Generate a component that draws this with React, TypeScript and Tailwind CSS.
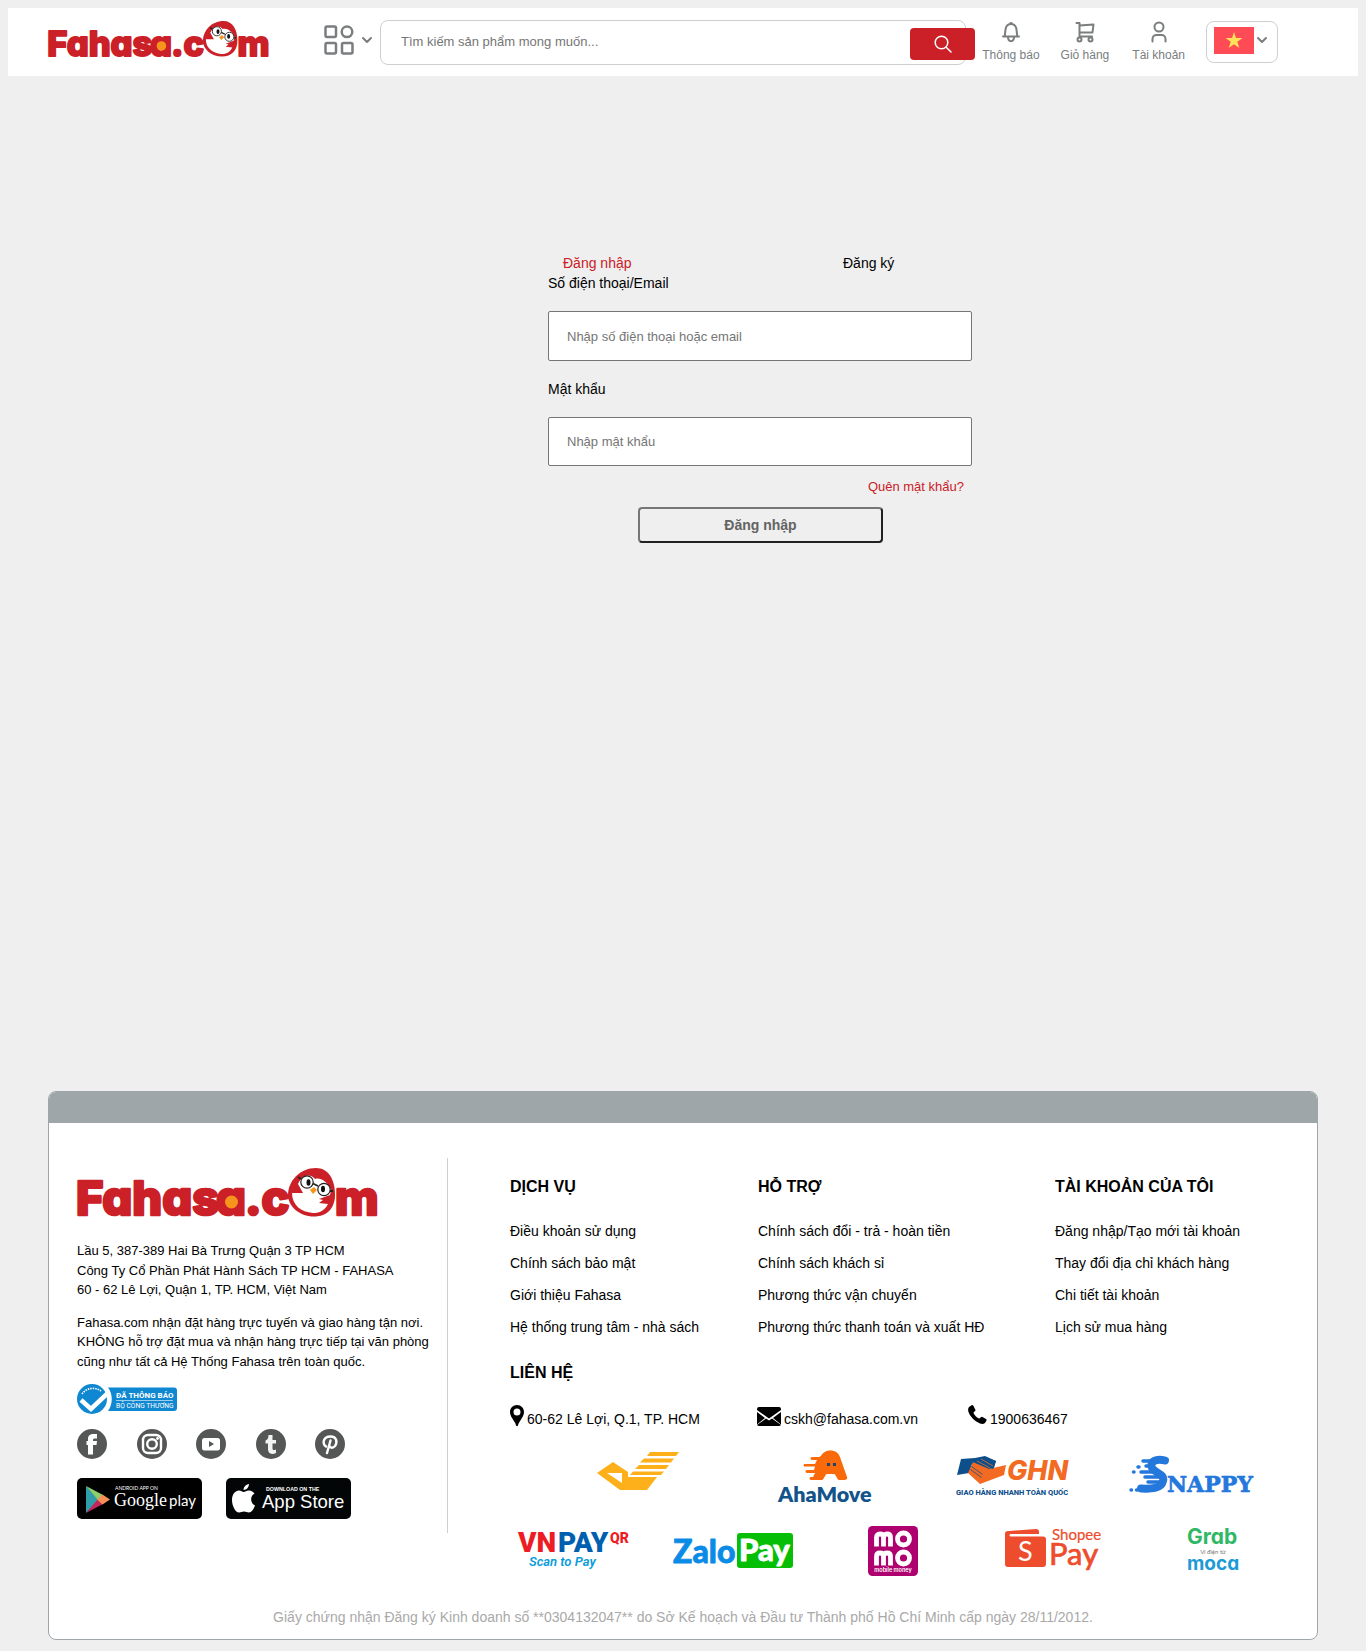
import React from "react";

function FahasaLogo({ className }: { className: string }) {
  return (
    <svg viewBox="0 0 301 49" className={`overflow-visible ${className}`} role="img" aria-label="Fahasa.com">
      <g
        className="[font-feature-settings:'cv11']"
        fill="#cb2027"
        stroke="#cb2027"
        strokeWidth="2.6"
        strokeLinejoin="round"
        fontFamily="Inter, sans-serif"
        fontWeight="800"
        fontSize="47"
      >
        <text x="-1" y="47">Fahas</text>
        <text x="139" y="47">a</text>
        <text x="168" y="47">.c</text>
        <text x="258" y="47">m</text>
      </g>
      <circle cx="154.500" cy="34" r="6.500" fill="#f7941d" />
      <path d="M239 0C251 0 258 11 258 27C258 40 250 48.500 237 48.500C222 48.500 211 38 211 27C211 13 223 0 239 0Z" fill="#cb2027" />
      <path d="M215 25L226 25L221 16C225 7 233 5 238 11C243 9 251 14 254 22L253 27L242 31L246 32L242 35L251 36C247 44 241 45 236 45C224 44 215 37 215 25Z" fill="#fff" />
      <g fill="#fff" stroke="#222" strokeWidth="1.200">
        <circle cx="230" cy="14" r="6.200" />
        <circle cx="247" cy="21.500" r="6.200" />
        <path d="M236 15.500L241 18M224 11L221 9M253 23L256 23" fill="none" strokeWidth="1.800" />
      </g>
      <ellipse cx="231.500" cy="14.500" rx="2" ry="3.200" fill="#111" />
      <ellipse cx="246" cy="21" rx="2" ry="3.200" fill="#111" />
      <path d="M237 19L240 22L236 26L233 22Z" fill="#f7941d" />
    </svg>
  );
}

function Chevron() {
  return (
    <svg viewBox="0 0 12 8" className="h-2 w-3" fill="none" stroke="#7a7e7f" strokeWidth="2" strokeLinecap="round" strokeLinejoin="round">
      <path d="M2 2L6 6L10 2" />
    </svg>
  );
}

function Action({ label, className, children }: { label: string; className: string; children: React.ReactNode }) {
  return (
    <a href="#" className={`flex flex-col items-center text-xs leading-4 whitespace-nowrap text-[#7a7e7f] ${className}`}>
      <svg viewBox="0 0 20 22" className="mb-1 h-[22px] w-5" fill="none" stroke="#7a7e7f" strokeWidth="2" strokeLinecap="round" strokeLinejoin="round">
        {children}
      </svg>
      {label}
    </a>
  );
}

function Header() {
  return (
    <header className="flex h-17 items-start bg-white pr-20 pl-10">
      <a href="#" className="mt-[13px] shrink-0">
        <FahasaLogo className="h-9 w-[221px]" />
      </a>
      <button type="button" aria-label="Danh mục" className="mt-[17px] ml-[55px] flex shrink-0 items-center gap-[7px]">
        <svg viewBox="0 0 30 30" className="h-[30px] w-[30px]" fill="none" stroke="#7a7e7f" strokeWidth="2.500">
          <rect x="1.500" y="1.500" width="10.500" height="10.500" rx="1.500" />
          <circle cx="23" cy="6.800" r="5.300" />
          <rect x="1.500" y="18" width="10.500" height="10.500" rx="1.500" />
          <rect x="18" y="18" width="10.500" height="10.500" rx="1.500" />
        </svg>
        <Chevron />
      </button>
      <form className="relative mt-3 ml-[7px] h-[45px] min-w-0 flex-1 rounded-lg border border-[#cdcfd0]">
        <input
          type="text"
          aria-label="Tìm kiếm"
          placeholder="Tìm kiếm sản phẩm mong muốn..."
          className="h-[41px] w-full bg-transparent pr-16 pl-5 text-[13px] outline-none placeholder:text-[#757575]"
        />
        <button type="button" aria-label="Tìm" className="absolute top-[7px] -right-2.5 flex h-8 w-[65px] items-center justify-center rounded bg-[#cb2027]">
          <svg viewBox="0 0 18 18" className="h-[18px] w-[18px]" fill="none" stroke="#fff" strokeWidth="1.500" strokeLinecap="round">
            <circle cx="7.500" cy="7.500" r="6.300" />
            <path d="M12.200 12.200L17 17" />
          </svg>
        </button>
      </form>
      <nav className="mt-[13px] ml-4 flex shrink-0 items-start">
        <Action label="Thông báo" className="mr-[21px]">
          <path d="M2 15.500H18M3.500 15.500C4.500 13 4 8.500 5 6.500C6 4 8 3 10 3C12 3 14 4 15 6.500C16 8.500 15.500 13 16.500 15.500M9 3C9 1.500 11 1.500 11 3M7 16C7 21.500 13 21.500 13 16" />
        </Action>
        <Action label="Giỏ hàng" className="mr-[23px]">
          <path d="M1.500 2H4.500V15.500M4.500 4.500L18.500 3.500L17.500 11.500H4.500M4.500 15.500H17" />
          <circle cx="4.500" cy="18.500" r="2" />
          <circle cx="15.500" cy="18.500" r="2" />
        </Action>
        <Action label="Tài khoản" className="mr-[21px]">
          <circle cx="10" cy="6" r="4.500" />
          <path d="M3.500 20.500V18C3.500 15.500 5.500 14 7.500 14H12.500C14.500 14 16.500 15.500 16.500 18V20.500" />
        </Action>
        <button type="button" aria-label="Tiếng Việt" className="flex h-[42px] w-[72px] items-center gap-0.5 rounded-lg border border-[#cdcfd0] pb-1 pl-[7px]">
          <svg viewBox="0 0 40 27" className="h-[27px] w-10">
            <rect width="40" height="27" fill="#ff4b55" />
            <path d="M20 5L22 11H28.500L23.300 14.800L25.300 21L20 17.200L14.700 21L16.700 14.800L11.500 11H18Z" fill="#ffe15a" />
          </svg>
          <Chevron />
        </button>
      </nav>
    </header>
  );
}

function LoginForm() {
  return (
    <main className="mt-[177px] ml-[40%] w-[424px] text-sm leading-5">
      <div className="flex">
        <a href="#" className="w-[295px] pl-[15px] text-[#cb2027]">Đăng nhập</a>
        <a href="#">Đăng ký</a>
      </div>
      <form className="flex flex-col">
        <label htmlFor="account">Số điện thoại/Email</label>
        <input
          id="account"
          type="text"
          placeholder="Nhập số điện thoại hoặc email"
          className="mt-[18px] h-[50px] rounded-xs border border-[#767676] bg-white px-[18px] text-[13px] placeholder:text-[#757575]"
        />
        <label htmlFor="password" className="mt-[18px]">Mật khẩu</label>
        <input
          id="password"
          type="password"
          placeholder="Nhập mật khẩu"
          className="mt-[18px] h-[49px] rounded-xs border border-[#767676] bg-white px-[18px] text-[13px] placeholder:text-[#757575]"
        />
        <a href="#" className="mt-[11px] mr-2 self-end text-[13px] text-[#cb2027]">Quên mật khẩu?</a>
        <button
          type="button"
          className="mt-2.5 ml-[90px] h-9 w-[245px] rounded border-2 border-t-[#767676] border-r-[#212121] border-b-[#212121] border-l-[#767676] font-bold text-[#636363]"
        >
          Đăng nhập
        </button>
      </form>
    </main>
  );
}

function TradeBadge() {
  return (
    <svg viewBox="0 0 100 30" className="mt-[13px] h-[30px] w-[100px] overflow-visible" role="img" aria-label="Đã thông báo Bộ Công Thương">
      <path d="M31 3.500H97A3 3 0 0 1 100 6.500V24A3 3 0 0 1 97 27H31C36 20 36 10 31 3.500Z" fill="#0f87d1" />
      <circle cx="15" cy="15" r="15" fill="#0f87d1" />
      <path d="M4 16L14 25L32 8" fill="none" stroke="#fff" strokeWidth="4.500" />
      <path d="M5 10C9 4 18 2.500 24 7" fill="none" stroke="#fff" strokeWidth="1.600" strokeDasharray="1.500 1" />
      <g fill="#fff" fontFamily="Roboto, sans-serif">
        <text x="39" y="14" fontSize="8" fontWeight="700">ĐÃ THÔNG BÁO</text>
        <text x="39" y="24" fontSize="6.700">BỘ CÔNG THƯƠNG</text>
      </g>
      <path d="M39 16.500H96" stroke="#fff" strokeWidth=".6" />
    </svg>
  );
}

function SocialIcon({ label, children }: { label: string; children: React.ReactNode }) {
  return (
    <a href="#" aria-label={label}>
      <svg viewBox="0 0 30 30" className="h-[30px] w-[30px]">
        <circle cx="15" cy="15" r="15" fill="#555756" />
        {children}
      </svg>
    </a>
  );
}

function GooglePlay() {
  return (
    <svg viewBox="0 0 125 41" className="h-[41px] w-[125px]" role="img" aria-label="Google play">
      <rect width="125" height="41" rx="5" fill="#000" />
      <path d="M9 8L22 22L9 35Z" fill="#2f9eaa" />
      <path d="M9 8L26 17L21 22Z" fill="#8fce6a" />
      <path d="M9 35L26 26L21 21Z" fill="#c2265b" />
      <path d="M25.500 16.500L33 21.500L25.500 26.500L20 21.500Z" fill="#f69054" />
      <g fill="#fff">
        <text x="38" y="12" fontFamily="Lato, sans-serif" fontSize="5">ANDROID APP ON</text>
        <text x="37" y="28" fontFamily="Liberation Serif, serif" fontSize="18">Google</text>
        <text x="92" y="28" fontFamily="Lato, sans-serif" fontSize="15">play</text>
      </g>
    </svg>
  );
}

function AppStore() {
  return (
    <svg viewBox="0 0 125 41" className="h-[41px] w-[125px]" role="img" aria-label="App Store">
      <rect width="125" height="41" rx="5" fill="#020607" />
      <path d="M23 6C23 9 20.500 12 17.500 12C17.500 9 20 6.500 23 6ZM17.500 14C19 14 20.500 12.500 23 12.500C25.500 12.500 27.500 14 28.500 15.500C23.500 18.500 24.500 25.500 29 27.500C27.500 31.500 25.500 34.500 23 34.500C21 34.500 20 33.500 18 33.500C16 33.500 15 34.500 13 34.500C9.500 34.500 6 28 6 22C6 16 9.500 12.500 13 12.500C15 12.500 16.500 14 17.500 14Z" fill="#fff" />
      <g fill="#fff" fontFamily="Liberation Sans, sans-serif">
        <text x="40" y="13" fontSize="5.300" fontWeight="700">DOWNLOAD ON THE</text>
        <text x="36" y="30" fontSize="18.500">App Store</text>
      </g>
    </svg>
  );
}

function CompanyInfo() {
  return (
    <section className="w-[399px] shrink-0 border-r border-[#cdcfd0] pt-2.5 pb-3.5 pl-7 text-[13px] leading-normal whitespace-nowrap">
      <FahasaLogo className="h-[49px] w-[301px]" />
      <p className="mt-6">
        Lầu 5, 387-389 Hai Bà Trưng Quận 3 TP HCM<br />
        Công Ty Cổ Phần Phát Hành Sách TP HCM - FAHASA<br />
        60 - 62 Lê Lợi, Quận 1, TP. HCM, Việt Nam
      </p>
      <p className="mt-[13px]">
        Fahasa.com nhận đặt hàng trực tuyến và giao hàng tận nơi.<br />
        KHÔNG hỗ trợ đặt mua và nhận hàng trực tiếp tại văn phòng<br />
        cũng như tất cả Hệ Thống Fahasa trên toàn quốc.
      </p>
      <TradeBadge />
      <div className="mt-[15px] flex w-[268px] justify-between">
        <SocialIcon label="Facebook">
          <path d="M11 25.500V16H9.500V12H11V10C11 6.500 13 5 16.500 5H20V9.500H18C16.500 9.500 16 10 16 11V12H20L19.500 16H16V25.500Z" fill="#fff" />
        </SocialIcon>
        <SocialIcon label="Instagram">
          <rect x="6" y="6" width="18" height="18" rx="5" fill="none" stroke="#fff" strokeWidth="2.400" />
          <circle cx="15" cy="15" r="4.800" fill="none" stroke="#fff" strokeWidth="2.400" />
          <circle cx="20.500" cy="9.500" r="1.400" fill="#fff" />
        </SocialIcon>
        <SocialIcon label="YouTube">
          <rect x="6" y="9" width="18" height="12.500" rx="2.500" fill="#fff" />
          <path d="M13 12L18 15L13 18Z" fill="#555756" />
        </SocialIcon>
        <SocialIcon label="Tumblr">
          <path d="M12.500 6H16.500V11H20V14.500H16.500V19C16.500 21.500 18 21.500 20 20.500V24C15.500 26 12 24.500 12 20.500V14.500H9.500V11.500C11.500 11 12.500 9 12.500 6Z" fill="#f2f2f2" />
        </SocialIcon>
        <SocialIcon label="Pinterest">
          <path d="M11 17.500C7 14.500 8 7.500 15.500 7.500C22 7.500 22.500 13.500 20 17C18 19.500 15 19 14.500 17M15.500 11.500L12 24" fill="none" stroke="#fff" strokeWidth="2.400" strokeLinecap="round" />
        </SocialIcon>
      </div>
      <div className="mt-[19px] flex gap-6">
        <a href="#"><GooglePlay /></a>
        <a href="#"><AppStore /></a>
      </div>
    </section>
  );
}

function LinkColumn({ title, links }: { title: string; links: string[] }) {
  return (
    <div>
      <h2 className="text-base leading-6 font-bold">{title}</h2>
      <ul className="mt-4 leading-8">
        {links.map((link) => (
          <li key={link}><a href="#">{link}</a></li>
        ))}
      </ul>
    </div>
  );
}

function VnPost() {
  return (
    <svg viewBox="0 0 82 38" className="mt-0.5 h-[38px] w-[82px] shrink-0" role="img" aria-label="Vietnam Post">
      <path d="M0 21L16 10L31 20V25H60L50 38H23ZM10 21L25 31V21Z" fill="#fdb01a" fillRule="evenodd" />
      <path d="M53 0H82L79 4H50ZM47 6.500H77L74 10.500H43ZM42 13H72L69 17H38ZM36 19.500H67L64 23H33Z" fill="#fdb01a" />
    </svg>
  );
}

function AhaMove() {
  return (
    <svg viewBox="0 0 95 53" className="ml-[99px] h-[53px] w-[95px] shrink-0 overflow-visible" role="img" aria-label="AhaMove">
      <path d="M43 6C46 -1 59 -2 62 7L69 27C70 29 68 30 66 30H61C59 30 58 24 56 24H49C47 24 46 30 44 30H33C31 30 31 27 33 27H35L37 23H29C27 23 27 20 29 20H36L37 16.500H27C25 16.500 25 14 27 14H37L39 10H34C32 10 32 7 34 7H41Z" fill="#fb6a0a" />
      <rect x="49" y="13" width="3" height="3" fill="#17466f" />
      <rect x="55" y="13" width="3" height="3" fill="#17466f" />
      <text x="0" y="52" fontFamily="Lato, sans-serif" fontWeight="800" fontSize="21.500" fill="#125489">AhaMove</text>
    </svg>
  );
}

function Ghn() {
  return (
    <svg viewBox="0 0 113 41" className="mt-1.5 ml-[83px] h-[41px] w-[113px] shrink-0 overflow-visible" role="img" aria-label="GHN">
      <path d="M1 19L5 3L19 2L29 0L40 5L38 12L30 14L16 8L13 17Z" fill="#0d4f8b" />
      <path d="M17 6L33 13L50 9L48 19L24 28L12 17Z" fill="#f36a22" />
      <path d="M17 6L29 1L40 5L37 13Z" fill="#0d4f8b" />
      <path d="M16 9L27 17M15 12L26 20M14 15L25 23M21 5L34 12M25 3L37 10" stroke="#f36a22" strokeWidth=".8" />
      <path d="M15.500 10.500L26.500 18.500M14.500 13.500L25.500 21.500" stroke="#0d4f8b" strokeWidth=".8" />
      <text x="51" y="24" fontFamily="Inter, sans-serif" fontWeight="800" fontStyle="italic" fontSize="27" fill="#f36a22">GHN</text>
      <text x="0" y="39" fontFamily="Roboto, sans-serif" fontWeight="800" fontSize="7.500" fill="#0d4f8b">GIAO HÀNG NHANH TOÀN QUỐC</text>
    </svg>
  );
}

function Snappy() {
  return (
    <svg viewBox="0 0 124 40" className="mt-1.5 ml-[60px] h-10 w-[124px] shrink-0 overflow-visible" role="img" aria-label="Snappy">
      <g fill="none" stroke="#2478dc" strokeLinecap="round">
        <path d="M36 4.500C27 2 20 6 23 12C26 17 36 18 34 25C32 33 22 33 12 32.500" strokeWidth="8" />
        <path d="M14 5H22M17 10H23M12 16H28M16 21H32M19 26H31M11 34H24" strokeWidth="3.500" />
        <path d="M9 11H10M4.500 16H5M2 34H2.500M7.500 34H8" strokeWidth="3.500" />
      </g>
      <text x="38" y="36" fontFamily="DejaVu Serif, serif" fontWeight="700" fontSize="22" fill="#2478dc" stroke="#2478dc" strokeWidth=".6">NAPPY</text>
    </svg>
  );
}

function VnPay() {
  return (
    <svg viewBox="0 0 111 40" className="mt-1.5 h-10 w-[111px] shrink-0 overflow-visible" role="img" aria-label="VNPAY QR">
      <g fontFamily="Roboto, sans-serif" fontWeight="900">
        <text x="0" y="20" fontSize="28" fill="#ed1c24">VN</text>
        <text x="40" y="20" fontSize="28" fill="#0060af">PAY</text>
        <text x="92" y="11" fontSize="14" fill="#ed1c24">QR</text>
      </g>
      <text x="11" y="34" fontFamily="Roboto, sans-serif" fontStyle="italic" fontWeight="600" fontSize="13" fill="#0a9bdc">Scan to Pay</text>
    </svg>
  );
}

function ZaloPay() {
  return (
    <svg viewBox="0 0 120 35" className="mt-[7px] ml-[44px] h-[35px] w-[120px] shrink-0 overflow-visible" role="img" aria-label="ZaloPay">
      <rect x="64" width="56" height="35" rx="3" fill="#06be06" />
      <g fontFamily="Lato, sans-serif" fontWeight="900" fontSize="32" strokeLinejoin="round" strokeWidth=".8">
        <text x="0" y="29.500" fill="#0a8ce6" stroke="#0a8ce6">Zalo</text>
        <text x="66" y="28" fontSize="31" fill="#fff" stroke="#fff">Pay</text>
      </g>
    </svg>
  );
}

function Momo() {
  return (
    <svg viewBox="0 0 50 50" className="ml-[75px] h-[50px] w-[50px] shrink-0" role="img" aria-label="MoMo">
      <rect width="50" height="50" rx="4.500" fill="#ae006f" />
      <g fill="none" stroke="#fff" strokeWidth="4.800">
        <path d="M8.500 20.500V11.500Q8.500 8 12 8Q15.500 8 15.500 11.500V20.500M15.500 11.500Q15.500 8 19 8Q22.500 8 22.500 11.500V20.500" />
        <circle cx="35.500" cy="13" r="6" />
        <path d="M8.500 39.500V30.500Q8.500 27 12 27Q15.500 27 15.500 30.500V39.500M15.500 30.500Q15.500 27 19 27Q22.500 27 22.500 30.500V39.500" />
        <circle cx="35.500" cy="32" r="6" />
      </g>
      <text x="25" y="45.500" textAnchor="middle" fontFamily="Inter, sans-serif" fontWeight="600" fontSize="5.500" fill="#fff">mobile money</text>
    </svg>
  );
}

function ShopeePay() {
  return (
    <svg viewBox="0 0 96 46" className="mt-0.5 ml-[87px] h-[46px] w-24 shrink-0 overflow-visible" role="img" aria-label="ShopeePay">
      <path d="M0 6C0 3 2 3 4 3L31 1Q34 1 34 4V6H6C4 6 4 8.500 6 8.500H38Q41 8.500 41 11.500V35.500Q41 39 38 39H3Q0 39 0 36Z" fill="#ee4d2d" />
      <text x="13" y="33" fontFamily="Lato, sans-serif" fontSize="27" fill="#fff">S</text>
      <g fill="#ee4d2d" stroke="#ee4d2d" fontFamily="Lato, sans-serif">
        <text x="47" y="12" fontSize="15" strokeWidth=".2">Shopee</text>
        <text x="44" y="37" fontSize="31" strokeWidth=".7">Pay</text>
      </g>
    </svg>
  );
}

function GrabMoca() {
  return (
    <svg viewBox="0 0 50 45" className="mt-0.5 ml-[87px] h-[45px] w-[50px] shrink-0 overflow-visible" role="img" aria-label="Grab moca">
      <g className="[font-feature-settings:'cv11']" fontFamily="Inter, sans-serif" fontWeight="700">
        <text x="-1" y="16" fontSize="21" fill="#2fb866">Grab</text>
        <text x="-1" y="42" fontSize="19" fill="#1c9ad6">moca</text>
      </g>
      <text x="25" y="26" textAnchor="middle" fontFamily="Lato, sans-serif" fontSize="6" fill="#777">Ví điện tử</text>
    </svg>
  );
}

function Contact() {
  return (
    <>
      <h2 className="mt-[18px] text-base leading-6 font-bold">LIÊN HỆ</h2>
      <div className="mt-5 flex h-6 leading-6">
        <p className="flex w-[247px] items-start gap-[3px]">
          <svg viewBox="0 0 14 22" className="h-[22px] w-3.5">
            <path d="M7 0C3 0 0 3 0 7C0 10 1.500 12 3 14.500C4.500 17 5.500 18 6 20.500Q7 22 8 20.500C8.500 18 9.500 17 11 14.500C12.500 12 14 10 14 7C14 3 11 0 7 0ZM7 3.500A3.500 3.500 0 1 1 7 10.500A3.500 3.500 0 1 1 7 3.500Z" fill="#000" fillRule="evenodd" />
          </svg>
          <span className="pt-0.5">60-62 Lê Lợi, Q.1, TP. HCM</span>
        </p>
        <p className="flex w-[211px] items-start gap-[3px]">
          <svg viewBox="0 0 24 19" className="mt-0.5 h-[19px] w-6" fill="#000">
            <path d="M0 2Q0 0 2 0H22Q24 0 24 2V3L12 11.500L0 3ZM0 5L8 11L0 17.500ZM24 5L16 11L24 17.500ZM9 11.500L12 13.500L15 11.500L24 18Q23 19 22 19H2Q1 19 0 18Z" />
          </svg>
          <span className="pt-0.5">cskh@fahasa.com.vn</span>
        </p>
        <p className="flex items-start gap-[3px]">
          <svg viewBox="0 0 19 19" className="h-[19px] w-[19px]" fill="#000">
            <path d="M1 2L4 0Q5 0 5.500 1L7.500 5Q7.500 6 6.500 6.500L5.500 7.500C6 10 9 13 11.500 13.500L12.500 12.500Q13.500 11.500 14.500 12L18 14Q19 14.500 18.500 15.500L17 18Q15 19.500 12 18.500C7 16.500 2 11.500 .5 7Q-.5 4 1 2Z" />
          </svg>
          <span className="pt-0.5">1900636467</span>
        </p>
      </div>
    </>
  );
}

function Footer() {
  return (
    <footer className="mx-10 mt-[548px] overflow-hidden rounded-lg border border-[#9fa6a9] bg-white text-sm">
      <div className="h-[31px] bg-[#9fa6a9]" />
      <div className="flex items-start pt-[35px]">
        <CompanyInfo />
        <section className="min-w-0 flex-1 pt-[17px]">
          <div className="grid grid-cols-[248px_297px_1fr] pl-[62px] whitespace-nowrap">
            <LinkColumn title="DỊCH VỤ" links={["Điều khoản sử dụng", "Chính sách bảo mật", "Giới thiệu Fahasa", "Hệ thống trung tâm - nhà sách"]} />
            <LinkColumn title="HỖ TRỢ" links={["Chính sách đổi - trả - hoàn tiền", "Chính sách khách sỉ", "Phương thức vận chuyển", "Phương thức thanh toán và xuất HĐ"]} />
            <LinkColumn title="TÀI KHOẢN CỦA TÔI" links={["Đăng nhập/Tạo mới tài khoản", "Thay đổi địa chỉ khách hàng", "Chi tiết tài khoản", "Lịch sử mua hàng"]} />
          </div>
          <div className="pl-[62px] whitespace-nowrap">
            <Contact />
          </div>
          <div className="mt-[21px] flex h-[53px] items-start pl-[149px]">
            <VnPost />
            <AhaMove />
            <Ghn />
            <Snappy />
          </div>
          <div className="mt-[23px] flex h-[50px] items-start pl-[70px]">
            <VnPay />
            <ZaloPay />
            <Momo />
            <ShopeePay />
            <GrabMoca />
          </div>
        </section>
      </div>
      <p className="mt-[31px] pb-3 text-center leading-5 text-[#a9a9a9]">
        Giấy chứng nhận Đăng ký Kinh doanh số **0304132047** do Sở Kế hoạch và Đầu tư Thành phố Hồ Chí Minh cấp ngày 28/11/2012.
      </p>
    </footer>
  );
}

export default function App() {
  return (
    <div className="bg-[#efefef] px-2 pt-2 pb-[11px] font-['Liberation_Sans',Arial,sans-serif] text-black">
      <Header />
      <LoginForm />
      <Footer />
    </div>
  );
}
